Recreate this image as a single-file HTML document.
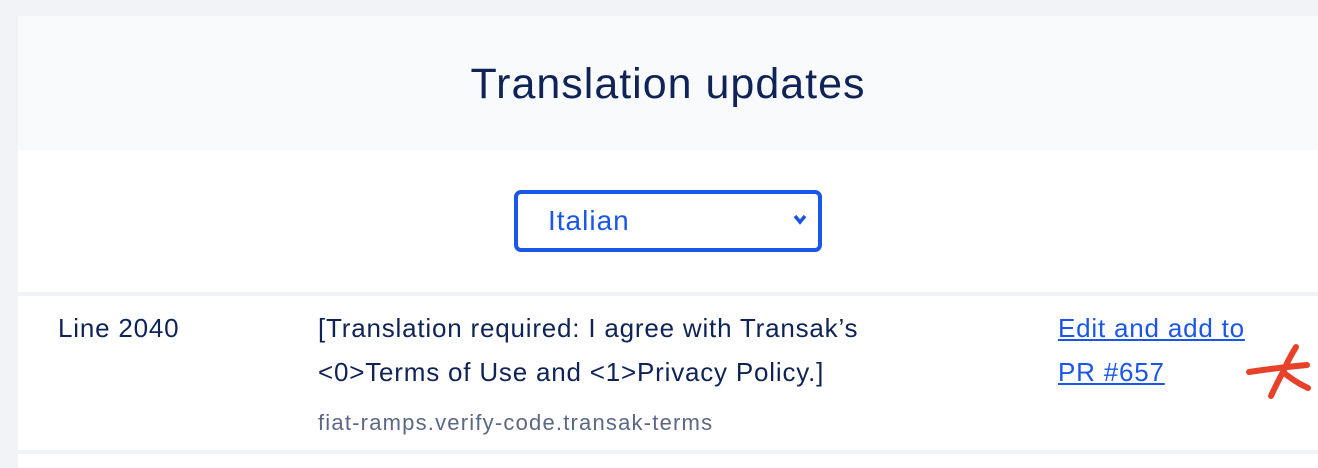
<!DOCTYPE html>
<html><head><style>
body{margin:0;width:1318px;height:468px;background:#f2f3f7;font-family:"Liberation Sans",sans-serif;overflow:hidden;position:relative;color:#0f2356}
.card{position:absolute;left:18px;top:16px;width:1300px;height:452px;background:#fff}
.hdr{position:absolute;left:0;top:0;width:1300px;height:134px;background:#f9fafc}
.hdr h1{margin:0;position:absolute;left:0;right:0;top:44px;text-align:center;font-weight:normal;font-size:43px;color:#0f2356;letter-spacing:1px}
.sel{position:absolute;left:496px;top:174px;width:300px;height:54px;border:4px solid #1a56e8;border-radius:7px}
.sel span{position:absolute;left:30px;top:11px;font-size:28px;letter-spacing:1px;color:#1a56e8}
.sep1{position:absolute;left:0;top:276px;width:1300px;height:4px;background:#f2f3f7}
.sep2{position:absolute;left:0;top:434px;width:1300px;height:4px;background:#f2f3f7}
.t{position:absolute;font-size:26px;letter-spacing:0.8px;white-space:nowrap}
a{color:#1a56e8;text-decoration:underline}
</style></head><body>
<div class="card">
<div class="hdr"><h1>Translation updates</h1></div>
<div class="sel"><span>Italian</span>
<svg style="position:absolute;left:274px;top:18px" width="16" height="14" viewBox="0 0 16 14"><path d="M3 4 L8 10 L13 4" stroke="#1a56e8" stroke-width="3.5" fill="none"/></svg></div>
<div class="sep1"></div>
<div class="t" style="left:40px;top:297px">Line 2040</div>
<div class="t" style="left:300px;top:297px">[Translation required: I agree with Transak’s</div>
<div class="t" style="left:300px;top:341px">&lt;0&gt;Terms of Use and &lt;1&gt;Privacy Policy.]</div>
<div class="t" style="left:300px;top:394px;font-size:22px;letter-spacing:1.2px;color:#5a6785">fiat-ramps.verify-code.transak-terms</div>
<div class="t" style="left:1040px;top:297px"><a>Edit and add to</a></div>
<div class="t" style="left:1040px;top:341px"><a>PR #657</a></div>
<div class="sep2"></div>
</div>
<svg style="position:absolute;left:1240px;top:340px" width="78" height="64" viewBox="0 0 78 64"><g stroke="#e8412a" stroke-width="6" stroke-linecap="round" fill="none"><path d="M9 32 Q35 28 67 25"/><path d="M56 7 Q48 20 43 32 Q36 45 31 56"/><path d="M43 32 Q55 42 68 48"/></g></svg>
</body></html>
